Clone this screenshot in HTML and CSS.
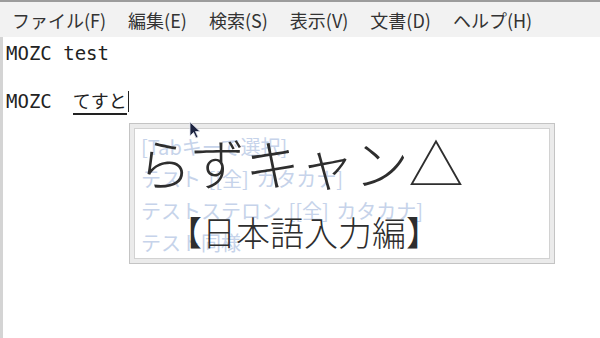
FILE: index.html
```html
<!DOCTYPE html>
<html lang="ja">
<head>
  <meta charset="UTF-8">
  <title>MOZC test</title>
  <link rel="stylesheet" href="styles.css">
</head>
<body>
  <div class="window">
    <div class="menubar">
      <span>ファイル(F)</span>
      <span>編集(E)</span>
      <span>検索(S)</span>
      <span>表示(V)</span>
      <span>文書(D)</span>
      <span>ヘルプ(H)</span>
    </div>
    <div class="editor">
      <div class="line">MOZC test</div>
      <div class="line">&nbsp;</div>
      <div class="line">MOZC&nbsp;&nbsp;<span class="preedit">てすと</span><span class="caret"></span></div>

      <div class="popup">
        <div class="popup-inner">
          <div class="cand">[Tabキーで選択]</div>
          <div class="cand">テスト [[全] カタカナ]</div>
          <div class="cand">テストステロン [[全] カタカナ]</div>
          <div class="cand">テスト同様</div>
        </div>
      </div>

      <svg class="pointer" width="14" height="20" viewBox="0 0 14 20">
        <path d="M1 1 L1 15 L4.5 11.5 L7 17 L9 16 L6.5 10.5 L11 10.5 Z" fill="#1c2340" stroke="#dfe3ee" stroke-width="0.8"/>
      </svg>

      <div class="title">
        <div class="title-main">らずキャン△</div>
        <div class="title-sub">【日本語入力編】</div>
      </div>
    </div>
  </div>
</body>
</html>
```

FILE: styles.css
```css
body {
  margin: 0;
  width: 600px;
  height: 338px;
  overflow: hidden;
  background: #fff;
}
.window {
  display: flex;
  flex-direction: column;
  height: 338px;
  border-top: 2px solid #9c9c9c;
  box-sizing: border-box;
}
.menubar {
  display: flex;
  gap: 22px;
  height: 35px;
  align-items: center;
  padding-left: 12px;
  background: #f2f2f2;
  font-family: "Noto Sans CJK JP", "Noto Sans", sans-serif;
  font-size: 18px;
  color: #333;
}
.editor {
  position: relative;
  flex: 1;
  background: #fff;
  border-left: 3px solid #d4d4d4;
  padding: 4px 0 0 3px;
  font-family: "DejaVu Sans Mono", "Noto Sans CJK JP", monospace;
  font-size: 19px;
  color: #222;
}
.line {
  height: 24px;
  line-height: 24px;
  white-space: nowrap;
}
.preedit {
  font-family: "Noto Sans CJK JP", sans-serif;
  font-size: 18px;
  border-bottom: 2px solid #222;
  line-height: 20px;
  margin-left: -2px;
}
.caret {
  display: inline-block;
  width: 1px;
  height: 21px;
  background: #222;
  vertical-align: -4px;
  margin-left: 1px;
}
.popup {
  position: absolute;
  left: 126px;
  top: 86px;
  width: 426px;
  height: 141px;
  box-sizing: border-box;
  border: 1px solid #c4c4c4;
  background: #ebebeb;
  padding: 4px;
}
.popup-inner {
  height: 100%;
  box-sizing: border-box;
  background: #fff;
  border: 1px solid #d2d2d2;
  padding: 2px 0 0 6px;
  font-family: "Noto Sans CJK JP", sans-serif;
  font-size: 20px;
  word-spacing: 3px;
  color: #c6d3ea;
}
.cand {
  height: 32px;
  line-height: 32px;
  white-space: nowrap;
}
.pointer {
  position: absolute;
  left: 186px;
  top: 84px;
}
.title {
  position: absolute;
  left: 134px;
  top: 92px;
  font-family: "Noto Sans CJK JP", sans-serif;
  color: #2e2e2e;
  font-weight: 300;
}
.title-main {
  font-size: 55px;
  line-height: 64px;
  letter-spacing: -0.5px;
}
.title-sub {
  font-size: 34px;
  line-height: 44px;
  margin-left: 31px;
  margin-top: 17px;
}
```
